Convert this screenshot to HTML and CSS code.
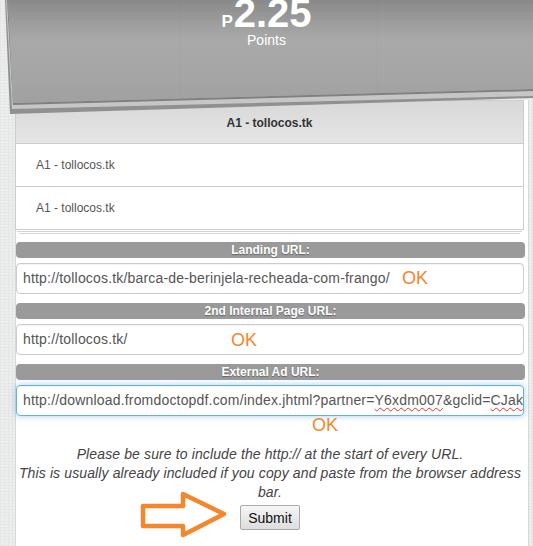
FILE: index.html
```html
<!DOCTYPE html>
<html lang="en">
<head>
    <meta charset="UTF-8">
    <meta name="viewport" content="width=device-width, initial-scale=1.0">
    <title>Submit URLs</title>
    <link rel="stylesheet" href="styles.css">
</head>
<body>
    <div class="top">
        <div class="sheet sheet-low"></div>
        <div class="sheet sheet-mid"></div>
        <div class="sheet sheet-edge"></div>
        <div class="sheet sheet-main"></div>
        <div class="points">
            <div class="points-value"><span class="cur">P</span>2.25</div>
            <div class="points-label">Points</div>
        </div>
    </div>

    <div class="page">
        <div class="list">
            <div class="list-head">A1 - tollocos.tk</div>
            <div class="list-item">A1 - tollocos.tk</div>
            <div class="list-item">A1 - tollocos.tk</div>
        </div>

        <form class="url-form" onsubmit="return false;">
            <div class="field-label">Landing URL:</div>
            <div class="field">
                <div class="url-box">http://tollocos.tk/barca-de-berinjela-recheada-com-frango/</div>
                <span class="ok ok-1">OK</span>
            </div>

            <div class="field-label">2nd Internal Page URL:</div>
            <div class="field">
                <div class="url-box">http://tollocos.tk/</div>
                <span class="ok ok-2">OK</span>
            </div>

            <div class="field-label">External Ad URL:</div>
            <div class="field">
                <div class="url-box focused">http://download.fromdoctopdf.com/index.jhtml?partner=<span class="typo">Y6xdm007</span>&amp;gclid=<span class="typo">CJakrIeWgMUCFQ</span></div>
                <span class="ok ok-3">OK</span>
            </div>

            <p class="hint">Please be sure to include the http:// at the start of every URL.<br>This is usually already included if you copy and paste from the browser address bar.</p>

            <div class="submit-row">
                <svg class="arrow" width="92" height="48" viewBox="0 0 92 48">
                    <polygon points="5,15 45,15 45,3 86,23 45,44 45,35 5,35" fill="none" stroke="#f5862c" stroke-width="4.5" stroke-linejoin="round"/>
                </svg>
                <button class="submit-btn">Submit</button>
            </div>
        </form>
    </div>
</body>
</html>
```

FILE: styles.css
```css
html, body {
    overflow: hidden;
}
body {
    margin: 0;
    padding: 0;
    font-family: "Liberation Sans", Arial, sans-serif;
    background-color: #eceeed;
    background-image:
        repeating-linear-gradient(0deg, rgba(0, 0, 0, 0.025) 0 1px, transparent 1px 3px),
        repeating-linear-gradient(90deg, rgba(0, 0, 0, 0.025) 0 1px, transparent 1px 4px);
}

/* Header sheets */
.top {
    position: relative;
    display: flow-root;
    height: 100px;
    z-index: 2;
}
.sheet {
    position: absolute;
    left: 0;
    top: 0;
    width: 533px;
    height: 120px;
}
.sheet-low {
    background: #909090;
    clip-path: polygon(5px 0, 533px 0, 533px 98px, 10px 114px);
}
.sheet-mid {
    background: #c6c6c6;
    clip-path: polygon(6px 0, 533px 0, 533px 96px, 12px 109px);
}
.sheet-edge {
    background: #808080;
    clip-path: polygon(7px 0, 533px 0, 533px 91px, 13px 105px);
}
.sheet-main {
    background-color: #a3a3a3;
    background-image:
        linear-gradient(90deg, transparent 180px, rgba(0, 0, 0, 0.025) 180px 181px, transparent 181px 377px, rgba(0, 0, 0, 0.025) 377px 378px, transparent 378px),
        linear-gradient(180deg, #898989 0, #9c9c9c 22px, #a9a9a9 40px, #a6a6a6 70px, #a1a1a1 100px);
    clip-path: polygon(8px 0, 533px 0, 533px 89px, 13px 103px);
}

.points {
    position: relative;
    text-align: center;
    color: #fff;
}
.points-value {
    font-size: 40px;
    font-weight: bold;
    line-height: 30px;
    height: 30px;
    margin-top: -2px;
}
.cur {
    font-size: 17px;
    line-height: 17px;
    margin-right: 1px;
}
.points-label {
    font-size: 14px;
    line-height: 16px;
    margin-top: 4px;
}

/* Main column */
.page {
    margin-left: 15px;
    width: 508px;
    min-height: 446px;
    padding-right: 4px;
    background: #fff;
    border-left: 1px solid #d8d8d8;
    border-right: 1px solid #d8d8d8;
}

.list {
    border: 1px solid #cccccc;
    margin-left: -1px;
    background: #fff;
    box-shadow:
        0 3px 0 -2px #fff,
        0 4px 0 -2px #d4d4d4,
        0 7px 0 -4px #fff,
        0 8px 0 -4px #d4d4d4;
}
.list-head {
    height: 42px;
    line-height: 44px;
    text-align: center;
    font-size: 12px;
    font-weight: bold;
    color: #333;
    background: linear-gradient(180deg, #d8d8d8 0, #e5e5e5 100%);
    border-bottom: 1px solid #cccccc;
}
.list-item {
    height: 42px;
    line-height: 42px;
    padding-left: 20px;
    font-size: 12px;
    color: #555;
    border-bottom: 1px solid #cccccc;
}
.list-item:last-child {
    border-bottom: none;
}

/* Form */
.url-form {
    padding-top: 12px;
}
.field-label {
    height: 16px;
    line-height: 16px;
    background: #9a9a9a;
    border-radius: 4px;
    text-align: center;
    color: #fff;
    font-size: 12px;
    font-weight: bold;
    text-shadow: 0 1px 1px rgba(0, 0, 0, 0.35);
    margin-right: -1px;
}
.field {
    position: relative;
    margin: 5px 0 9px 0;
}
.url-box {
    height: 29px;
    line-height: 29px;
    padding: 0 6px;
    border: 1px solid #cccccc;
    border-radius: 4px;
    font-size: 14px;
    letter-spacing: 0.18px;
    color: #555;
    white-space: nowrap;
    overflow: hidden;
    box-shadow: inset 0 1px 1px rgba(0, 0, 0, 0.05);
}
.url-box.focused {
    border-color: #66afe9;
    box-shadow: inset 0 1px 1px rgba(0, 0, 0, 0.05), 0 0 6px rgba(102, 175, 233, 0.6);
}
.typo {
    text-decoration: underline wavy #e03030;
    text-decoration-thickness: 1px;
    text-underline-offset: 2px;
}

.ok {
    position: absolute;
    font-size: 18px;
    color: #f5862c;
    line-height: 20px;
}
.ok-1 {
    left: 386px;
    top: 5px;
}
.ok-2 {
    left: 215px;
    top: 6px;
}
.ok-3 {
    left: 296px;
    top: 30px;
}

.hint {
    margin: 29px 0 0 0;
    text-align: center;
    font-size: 14px;
    line-height: 19px;
    letter-spacing: 0.12px;
    font-style: italic;
    color: #444;
}

.submit-row {
    position: relative;
    text-align: center;
    margin-top: 3px;
}
.arrow {
    position: absolute;
    left: 122px;
    top: -14px;
}
.submit-btn {
    height: 25px;
    width: 60px;
    padding: 0;
    font-family: "Liberation Sans", Arial, sans-serif;
    font-size: 14px;
    color: #111;
    background: linear-gradient(180deg, #f6f6f6 0, #dddddd 100%);
    border: 1px solid #a9a9a9;
    border-radius: 2px;
    cursor: pointer;
}
```
